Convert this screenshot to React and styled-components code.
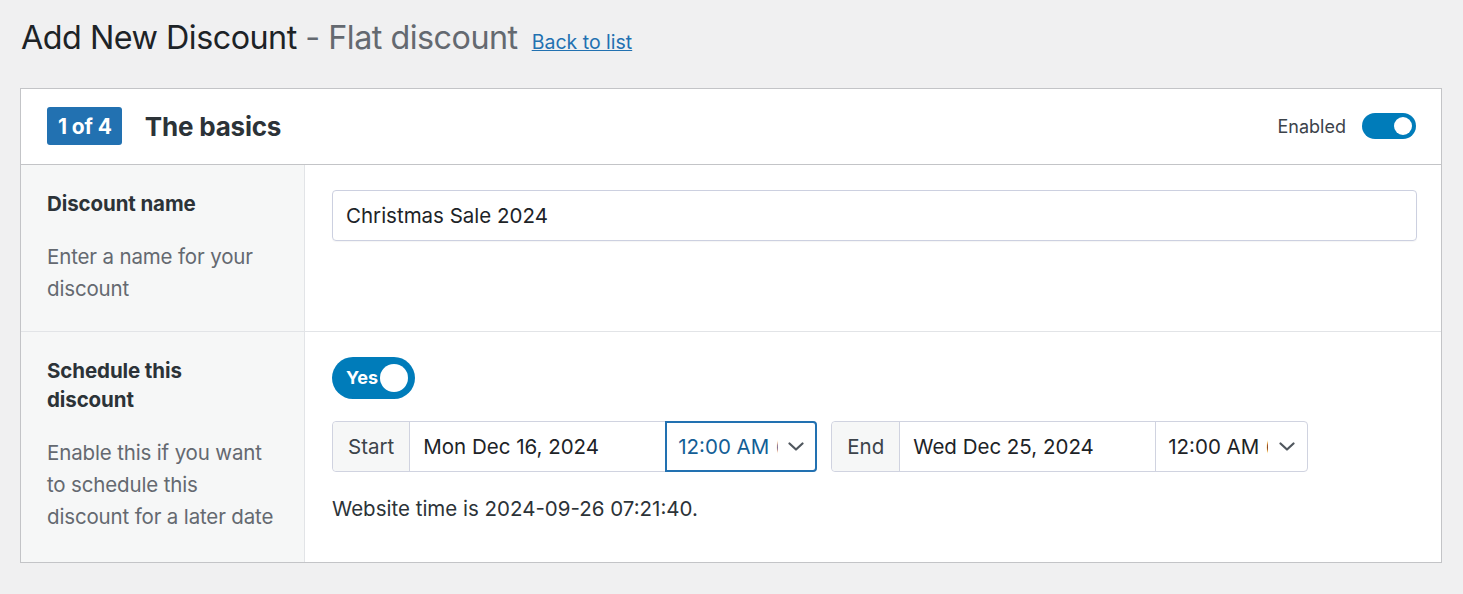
import React from 'react'
import styled, { createGlobalStyle } from 'styled-components'

const Global = createGlobalStyle`
  html, body {
    margin: 0;
    padding: 0;
    background: #f0f0f1;
    font-family: Inter, "Noto Sans", "Liberation Sans", sans-serif;
    color: #1d2327;
  }
`

const Chevron = () => (
  <svg width="16" height="9" viewBox="0 0 16 9" fill="none" stroke="#50575e" strokeWidth="2.2" strokeLinecap="round" strokeLinejoin="round">
    <path d="M1.5 1.5L8 7.5l6.5-6" />
  </svg>
)

const DateRange = ({ label, date, focused }) => (
  <Group>
    <Addon>{label}</Addon>
    <DateField>{date}</DateField>
    <TimeField focused={focused}>
      <TimeText focused={focused}>12:00 AM (UTC)</TimeText>
      <Chevron />
    </TimeField>
  </Group>
)

const App = () => {
  return (
    <Page>
      <Global />
      <TitleRow>
        <Title>Add New Discount <Sub>- Flat discount</Sub></Title>
        <BackLink href="#">Back to list</BackLink>
      </TitleRow>
      <Card>
        <CardHeader>
          <HeaderLeft>
            <Step>1 of 4</Step>
            <CardTitle>The basics</CardTitle>
          </HeaderLeft>
          <HeaderRight>
            <ToggleLabel>Enabled</ToggleLabel>
            <SmallToggle><Knob size={18} /></SmallToggle>
          </HeaderRight>
        </CardHeader>
        <Row>
          <Side>
            <Label>Discount name</Label>
            <Help>Enter a name for your discount</Help>
          </Side>
          <Main>
            <TextInput>Christmas Sale 2024</TextInput>
          </Main>
        </Row>
        <Row last>
          <Side last>
            <Label narrow>Schedule this discount</Label>
            <Help>Enable this if you want to schedule this discount for a later date</Help>
          </Side>
          <Main>
            <YesToggle>
              <span>Yes</span>
              <Knob size={28} />
            </YesToggle>
            <Ranges>
              <DateRange label="Start" date="Mon Dec 16, 2024" focused />
              <DateRange label="End" date="Wed Dec 25, 2024" />
            </Ranges>
            <Note>Website time is 2024-09-26 07:21:40.</Note>
          </Main>
        </Row>
      </Card>
    </Page>
  )
}

export default App

const Page = styled.div`
  padding: 19px 21px 32px 20px;
`
const TitleRow = styled.div`
  display: flex;
  align-items: baseline;
  gap: 14px;
  padding-left: 1px;
  margin-bottom: 30px;
`
const Title = styled.h1`
  margin: 0;
  font-size: 32.3px;
  font-weight: 400;
  letter-spacing: -0.5px;
  color: #1d2327;
  line-height: 1.2;
`
const Sub = styled.span`
  color: #646970;
`
const BackLink = styled.a`
  font-size: 19.5px;
  color: #2271b1;
  text-decoration: underline;
`
const Card = styled.div`
  background: #fff;
  border: 1px solid #c3c4c7;
  width: 1420px;
`
const CardHeader = styled.div`
  height: 75px;
  display: flex;
  align-items: center;
  justify-content: space-between;
  padding: 0 25px 0 26px;
  border-bottom: 1px solid #c3c4c7;
`
const HeaderLeft = styled.div`
  display: flex;
  align-items: center;
  gap: 23px;
`
const Step = styled.div`
  background: #2271b1;
  color: #fff;
  font-weight: 700;
  font-size: 21px;
  height: 38px;
  padding: 0 10px 0 11px;
  display: flex;
  align-items: center;
  border-radius: 3px;
  letter-spacing: -0.1px;
`
const CardTitle = styled.h2`
  margin: 0;
  font-size: 26px;
  font-weight: 700;
  color: #2c3338;
  letter-spacing: -0.2px;
`
const HeaderRight = styled.div`
  display: flex;
  align-items: center;
  gap: 16px;
`
const ToggleLabel = styled.span`
  font-size: 18px;
  color: #3c434a;
`
const SmallToggle = styled.div`
  width: 54px;
  height: 26px;
  border-radius: 13px;
  background: #007cba;
  display: flex;
  align-items: center;
  justify-content: flex-end;
  padding-right: 4px;
  box-sizing: border-box;
`
const Knob = styled.div`
  width: ${p => p.size}px;
  height: ${p => p.size}px;
  border-radius: 50%;
  background: #fff;
`
const Row = styled.div`
  display: grid;
  grid-template-columns: 284px 1fr;
  border-bottom: ${p => (p.last ? 'none' : '1px solid #e2e4e7')};
`
const Side = styled.div`
  background: #f6f7f7;
  border-right: 1px solid #e2e4e7;
  padding: 24px 20px ${p => (p.last ? '29px' : '26px')} 26px;
`
const Label = styled.div`
  font-size: 20.5px;
  font-weight: 700;
  color: #2c3338;
  line-height: 29px;
  margin-bottom: 23px;
  letter-spacing: -0.1px;
  max-width: ${p => (p.narrow ? '200px' : 'none')};
`
const Help = styled.div`
  font-size: 20.5px;
  color: #646970;
  line-height: 32px;
  letter-spacing: -0.15px;
`
const Main = styled.div`
  padding: 25px 24px 20px 27px;
`
const TextInput = styled.div`
  height: 51px;
  box-sizing: border-box;
  border: 1px solid #ccd0e0;
  border-radius: 4px;
  display: flex;
  align-items: center;
  padding-left: 13px;
  font-size: 20.5px;
  color: #1d2327;
  box-shadow: 0 1px 1px rgba(0,0,0,0.04);
`
const YesToggle = styled.div`
  width: 83px;
  height: 42px;
  border-radius: 21px;
  background: #007cba;
  color: #fff;
  font-weight: 700;
  font-size: 18px;
  display: flex;
  align-items: center;
  justify-content: space-between;
  padding: 0 7px 0 14px;
  box-sizing: border-box;
  margin-bottom: 22px;
`
const Ranges = styled.div`
  display: flex;
  gap: 14px;
`
const Group = styled.div`
  display: flex;
  height: 51px;
  border: 1px solid #d0d3e0;
  border-radius: 4px;
  box-sizing: border-box;
  font-size: 20.5px;
  color: #1d2327;
`
const Addon = styled.div`
  background: #f6f7f7;
  border-right: 1px solid #d0d3e0;
  border-radius: 4px 0 0 4px;
  display: flex;
  align-items: center;
  padding: 0 15px;
  color: #3c434a;
`
const DateField = styled.div`
  width: 255px;
  box-sizing: border-box;
  display: flex;
  align-items: center;
  padding-left: 13px;
`
const TimeField = styled.div`
  width: 152px;
  margin: ${p => (p.focused ? '-1px -1px -1px 0' : '0')};
  box-sizing: border-box;
  border-left: 1px solid #d0d3e0;
  border: ${p => (p.focused ? '2px solid #2271b1' : '')};
  border-radius: ${p => (p.focused ? '0 4px 4px 0' : '0')};
  display: flex;
  align-items: center;
  justify-content: space-between;
  padding: 0 ${p => (p.focused ? '11px' : '12px')} 0 ${p => (p.focused ? '11px' : '12px')};
`
const TimeText = styled.span`
  overflow: hidden;
  white-space: nowrap;
  color: ${p => (p.focused ? '#135e96' : '#1d2327')};
  width: 100px;
`
const Note = styled.div`
  margin-top: 24px;
  font-size: 20.5px;
  color: #2c3338;
`
